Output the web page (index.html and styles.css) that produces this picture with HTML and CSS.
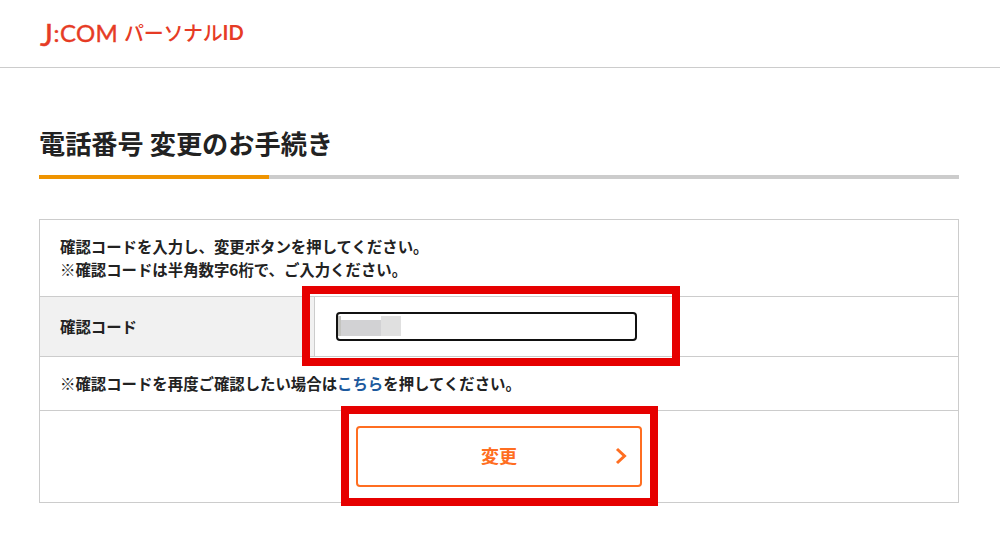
FILE: index.html
```html
<!DOCTYPE html>
<html lang="ja">
<head>
	<meta charset="UTF-8">
	<title>電話番号 変更のお手続き</title>
	<link rel="stylesheet" href="styles.css">
</head>
<body>
<header class="site-header">
	<div class="logo"><span class="logo-jcom"><span class="logo-j">J</span>:COM</span><span class="logo-sub">パーソナル</span><span class="logo-id">ID</span></div>
</header>
<main class="content">
	<h1 class="page-title">電話番号 変更のお手続き</h1>
	<div class="title-bar"><div class="title-bar-on"></div></div>
	<div class="panel">
		<div class="row row-intro">
			<p>確認コードを入力し、変更ボタンを押してください。</p>
			<p>※確認コードは半角数字6桁で、ご入力ください。</p>
		</div>
		<div class="row row-code">
			<div class="code-label">確認コード</div>
			<div class="code-field">
				<div class="code-input">
					<span class="blur blur-a"></span><span class="blur blur-b"></span><span class="blur blur-c"></span>
				</div>
			</div>
			<div class="mark mark-input"></div>
		</div>
		<div class="row row-note">※確認コードを再度ご確認したい場合は<a href="javascript:;">こちら</a>を押してください。</div>
		<div class="row row-submit">
			<a href="javascript:;" class="submit">変更
				<svg class="submit-arrow" width="12" height="18" viewBox="0 0 12 18"><path d="M2 2l7.5 7L2 16" fill="none" stroke="#ff6e21" stroke-width="3"/></svg>
			</a>
			<div class="mark mark-submit"></div>
		</div>
	</div>
</main>
</body>
</html>
```

FILE: styles.css
```css
*
{
    margin: 0;
    padding: 0;
    box-sizing: border-box;
    text-decoration: none;
}
body
{
    font-family: "Noto Sans CJK JP", "Liberation Sans", sans-serif;
    color: #222;
    background: #fff;
}
.site-header
{
    height: 68px;
    padding: 17px 0 0 40px;
    border-bottom: 1px solid #ccc;
}
.logo
{
    display: flex;
    align-items: center;
    height: 30px;
    color: #e63b25;
    white-space: nowrap;
}
.logo-jcom
{
    font-family: "Lato", sans-serif;
    font-size: 24px;
    font-weight: 400;
    letter-spacing: 0.4px;
    -webkit-text-stroke: 0.4px #e63b25;
    width: 84px;
}
.logo-j
{
    display: inline-block;
    font-size: 31px;
    line-height: 0;
    transform: translateY(4px);
}
.logo-sub
{
    font-size: 20px;
    font-weight: 500;
    letter-spacing: -0.3px;
}
.logo-id
{
    font-family: "Lato", sans-serif;
    font-size: 20px;
    font-weight: 700;
}
.content
{
    padding: 0 41px 37px 39px;
}
.page-title
{
    height: 51px;
    margin-top: 56px;
    font-size: 26.2px;
    font-weight: 700;
    line-height: 38px;
}
.title-bar
{
    height: 4px;
    background: #ccc;
}
.title-bar-on
{
    width: 230px;
    height: 4px;
    background: #ef9400;
}
.panel
{
    margin-top: 40px;
    border: 1px solid #ccc;
    font-size: 15.4px;
    font-weight: 700;
}
.row
{
    position: relative;
    border-bottom: 1px solid #ccc;
}
.row:last-child
{
    border-bottom: 0;
}
.row-intro
{
    height: 77px;
    padding: 15px 20px 0;
    line-height: 23px;
}
.row-code
{
    display: flex;
    height: 60px;
}
.code-label
{
    display: flex;
    align-items: center;
    width: 275px;
    padding: 0 0 2px 20px;
    background: #f1f1f1;
    border-right: 1px solid #ccc;
}
.code-field
{
    padding: 15px 0 0 21px;
}
.code-input
{
    display: flex;
    width: 301px;
    height: 29px;
    padding: 2px 0 0 0;
    border: 2px solid #111;
    border-radius: 4px;
    background: #fff;
}
.blur
{
    display: block;
    height: 20px;
}
.blur-a
{
    width: 3px;
    background: #c4c4c0;
}
.blur-b
{
    width: 40px;
    margin-top: 4px;
    height: 16px;
    background: #d2d2d4;
}
.blur-c
{
    width: 20px;
    background: #e0e0e0;
}
.row-note
{
    height: 54px;
    padding-left: 20px;
    line-height: 52px;
}
.row-note a
{
    color: #1d5a9e;
}
.row-submit
{
    display: flex;
    justify-content: center;
    height: 91px;
    padding: 15px 0 0 0;
}
.submit
{
    position: relative;
    display: flex;
    align-items: center;
    justify-content: center;
    width: 286px;
    height: 61px;
    padding-bottom: 4px;
    font-size: 18px;
    color: #ff6e21;
    border: 2px solid #ff6e21;
    border-radius: 4px;
}
.submit-arrow
{
    position: absolute;
    top: 19px;
    right: 13px;
}
.mark
{
    position: absolute;
    border: 8px solid #e60000;
}
.mark-input
{
    top: -11px;
    left: 262px;
    width: 378px;
    height: 80px;
}
.mark-submit
{
    top: -5px;
    left: 301px;
    width: 317px;
    height: 100px;
}
```
